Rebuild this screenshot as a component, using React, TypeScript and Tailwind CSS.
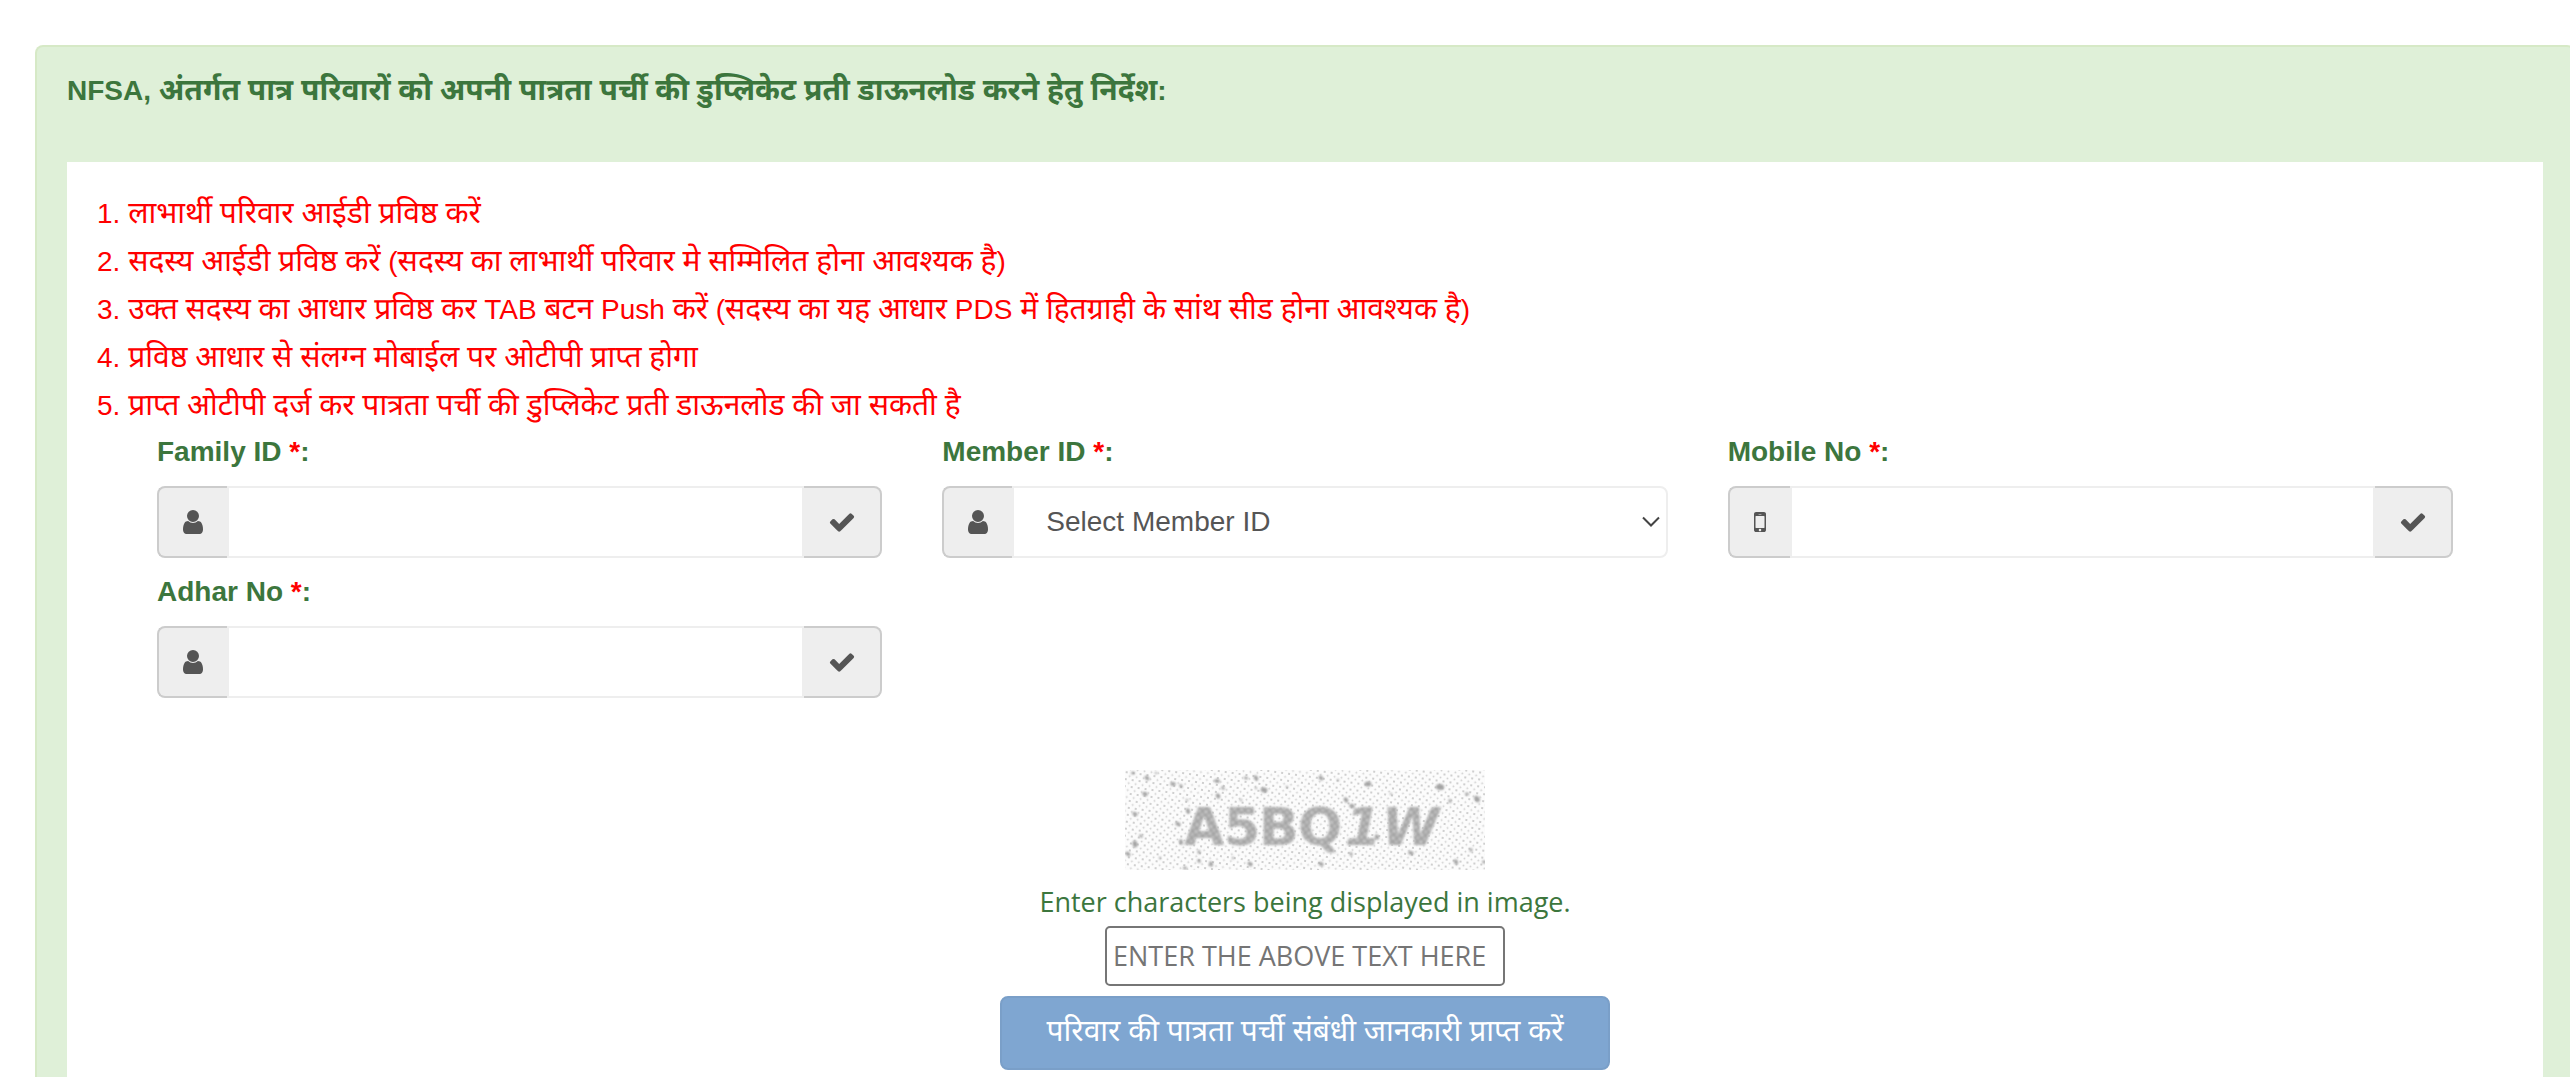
import type { ReactNode } from 'react'

const USER =
  'M1536 1399q0 109-62.5 187t-150.5 78h-854q-88 0-150.5-78t-62.5-187q0-85 8.5-160.5t31.5-152 58.5-131 94-89 134.5-34.5q131 128 313 128t313-128q76 0 134.5 34.5t94 89 58.5 131 31.5 152 8.5 160.5zm-256-887q0 159-112.5 271.5t-271.5 112.5-271.5-112.5-112.5-271.5 112.5-271.5 271.5-112.5 271.5 112.5 112.5 271.5z'
const CHECK =
  'M1671 566q0 40-28 68l-724 724-136 136q-28 28-68 28t-68-28l-136-136-362-362q-28-28-28-68t28-68l136-136q28-28 68-28t68 28l294 295 656-657q28-28 68-28t68 28l136 136q28 28 28 68z'
const MOBILE =
  'M976 1408q0-33-23.5-56.5t-56.5-23.5-56.5 23.5-23.5 56.5 23.5 56.5 56.5 23.5 56.5-23.5 23.5-56.5zm208-160v-704q0-13-9.5-22.5t-22.5-9.5h-512q-13 0-22.5 9.5t-9.5 22.5v704q0 13 9.5 22.5t22.5 9.5h512q13 0 22.5-9.5t9.5-22.5zm-192-848q0-16-16-16h-160q-16 0-16 16t16 16h160q16 0 16-16zm288-16v1024q0 52-38 90t-90 38h-512q-52 0-90-38t-38-90v-1024q0-52 38-90t90-38h512q52 0 90 38t38 90z'

const steps = [
  'लाभार्थी परिवार आईडी प्रविष्ठ करें',
  'सदस्य आईडी प्रविष्ठ करें (सदस्य का लाभार्थी परिवार मे सम्मिलित होना आवश्यक है)',
  'उक्त सदस्य का आधार प्रविष्ठ कर TAB बटन Push करें (सदस्य का यह आधार PDS में हितग्राही के सांथ सीड होना आवश्यक है)',
  'प्रविष्ठ आधार से संलग्न मोबाईल पर ओटीपी प्राप्त होगा',
  'प्राप्त ओटीपी दर्ज कर पात्रता पर्ची की डुप्लिकेट प्रती डाऊनलोड की जा सकती है',
]

// Devanagari runs are set larger than the Latin ones
function Hindi({ text }: { text: string }) {
  return (
    <>
      {text.split(/([\u0900-\u097F]+)/).map((part, i) =>
        i % 2 ? (
          <span key={i} className="font-['Noto_Sans_Devanagari','Noto_Sans',sans-serif] text-[30px]">
            {part}
          </span>
        ) : (
          part
        )
      )}
    </>
  )
}

function Icon({ d }: { d: string }) {
  return (
    <svg viewBox="0 0 1792 1792" className="size-7 fill-[#555]" aria-hidden="true">
      <path d={d} />
    </svg>
  )
}

const left = 'flex shrink-0 items-center justify-center rounded-l-lg border-2 border-r-0 border-[#ccc] bg-[#eee]'

function Field({ id, label, children }: { id: string; label: string; children: ReactNode }) {
  return (
    <div>
      <label htmlFor={id} className="block font-bold leading-10">
        {label} <span className="text-[red]">*</span>:
      </label>
      <div className="mt-[14px] flex h-[72px]">{children}</div>
    </div>
  )
}

function TextField({ id, label, icon = USER, narrow = false }: { id: string; label: string; icon?: string; narrow?: boolean }) {
  return (
    <Field id={id} label={label}>
      <span className={`${left} ${narrow ? 'w-[62px]' : 'w-[70px]'}`}>
        <Icon d={icon} />
      </span>
      <input id={id} type="text" className="min-w-0 grow border-2 border-[#eee] bg-white px-8 text-[#555] outline-none" />
      <span className="flex w-[78px] shrink-0 items-center justify-center rounded-r-lg border-2 border-l-0 border-[#ccc] bg-[#eee]">
        <Icon d={CHECK} />
      </span>
    </Field>
  )
}

const specks = [
  [8, 3, 3], [22, 8, 4], [48, 14, 4], [56, 16, 3], [92, 11, 4], [98, 18, 3], [121, 8, 3], [131, 8, 4], [139, 20, 5], [131, 18, 2],
  [20, 24, 4], [93, 26, 4], [53, 54, 4], [63, 41, 4], [10, 44, 4], [56, 72, 4], [16, 66, 3], [10, 74, 5], [3, 84, 4], [74, 82, 3],
  [74, 91, 3], [86, 94, 4], [125, 94, 4], [60, 98, 3], [196, 8, 4], [243, 14, 5], [213, 10, 2], [315, 17, 6], [352, 29, 5], [342, 24, 3],
  [221, 30, 4], [227, 36, 4], [252, 67, 4], [286, 83, 4], [226, 84, 3], [196, 94, 4], [331, 92, 4], [359, 92, 3], [325, 31, 3], [266, 24, 2],
  [108, 88, 2], [151, 72, 2], [35, 88, 2], [62, 30, 2], [346, 80, 3], [162, 17, 2], [31, 3, 2], [116, 30, 2],
]

function Captcha() {
  return (
    <svg viewBox="0 0 360 100" className="h-[100px] w-[360px]" role="img" aria-label="Captcha">
      <defs>
        <pattern id="grain" width="7" height="7" patternUnits="userSpaceOnUse" patternTransform="rotate(8)">
          <circle cx="2" cy="2" r="1.1" fill="#c4c4c4" />
          <circle cx="5.5" cy="5.5" r="1" fill="#d2d2d2" />
        </pattern>
        <pattern id="ink" width="7" height="7" patternUnits="userSpaceOnUse" patternTransform="rotate(8)">
          <rect width="7" height="7" fill="#a3a3a3" />
          <circle cx="2" cy="2" r="1.6" fill="#d4d4d4" />
          <circle cx="5.5" cy="5.5" r="1.4" fill="#cacaca" />
        </pattern>
        <filter id="soft">
          <feGaussianBlur stdDeviation="0.9" />
        </filter>
      </defs>
      <rect width="360" height="100" fill="#fcfcfc" />
      <rect width="360" height="100" fill="url(#grain)" />
      <g filter="url(#soft)">
        {specks.map(([x, y, s], i) => (
          <ellipse key={i} cx={x} cy={y} rx={s * 0.7} ry={s * 0.5} fill="#a3a3a3" transform={`rotate(${(i * 47) % 90} ${x} ${y})`} />
        ))}
        <text x="59 99 134 173" y="75" fill="url(#ink)" className="font-['DejaVu_Sans',sans-serif] text-[52px] font-bold">
          A5BQ
          <tspan x="220 257" className="italic">
            1W
          </tspan>
        </text>
      </g>
    </svg>
  )
}

export default function App() {
  return (
    <div className="flex min-h-screen flex-col overflow-x-clip bg-white pl-[35px] pt-[45px] font-['Liberation_Sans','Noto_Sans_Devanagari',sans-serif] text-[28px] text-[#3c763d]">
      <div className="-mr-[5px] flex grow flex-col rounded-t-lg border-2 border-b-0 border-[#d6e9c6] bg-[#dff0d8] px-[30px]">
        <h1 className="flex h-[115px] items-start pt-5 font-bold leading-[48px]">
          <span>
            <Hindi text="NFSA, अंतर्गत पात्र परिवारों को अपनी पात्रता पर्ची की डुप्लिकेट प्रती डाऊनलोड करने हेतु निर्देश:" />
          </span>
        </h1>
        <main className="grow bg-white px-[30px] pt-7">
          <ol className="mb-0.5 list-inside list-none text-[red]">
            {steps.map((step, i) => (
              <li key={step} className="h-12 leading-[48px]">
                {i + 1}. <Hindi text={step} />
              </li>
            ))}
          </ol>
          <form className="px-[60px]" onSubmit={(e) => e.preventDefault()}>
            <div className="grid grid-cols-3 gap-x-[60px] gap-y-[14px]">
              <TextField id="family" label="Family ID" />
              <Field id="member" label="Member ID">
                <span className={`${left} w-[70px]`}>
                  <Icon d={USER} />
                </span>
                <div className="relative grow">
                  <select id="member" className="h-full w-full appearance-none rounded-r-lg border-2 border-[#eee] bg-white px-8 text-[#555]">
                    <option>Select Member ID</option>
                  </select>
                  <svg viewBox="0 0 18 12" className="pointer-events-none absolute right-2 top-[30px] h-3 w-[18px] fill-none stroke-[#444] stroke-2">
                    <path d="M1 1.5l8 8 8-8" />
                  </svg>
                </div>
              </Field>
              <TextField id="mobile" label="Mobile No" icon={MOBILE} narrow />
              <TextField id="adhar" label="Adhar No" />
            </div>
            <div className="mt-[72px] flex flex-col items-center pb-1">
              <Captcha />
              <label htmlFor="captcha" className="mt-3 font-['Open_Sans',sans-serif] text-[27px] leading-10">
                Enter characters being displayed in image.
              </label>
              <input
                id="captcha"
                type="text"
                placeholder="ENTER THE ABOVE TEXT HERE"
                className="mt-1 h-[60px] w-[400px] rounded-[5px] border-2 border-[#767676] bg-white px-1.5 pb-0.5 font-['Open_Sans',sans-serif] text-[27px] text-black placeholder:text-[#757575]"
              />
              <button type="submit" className="mt-[10px] h-[74px] w-[610px] rounded-lg border-2 border-[#7a9fc8] bg-[#7fa6d1] text-white">
                <Hindi text="परिवार की पात्रता पर्ची संबंधी जानकारी प्राप्त करें" />
              </button>
            </div>
          </form>
        </main>
      </div>
    </div>
  )
}
